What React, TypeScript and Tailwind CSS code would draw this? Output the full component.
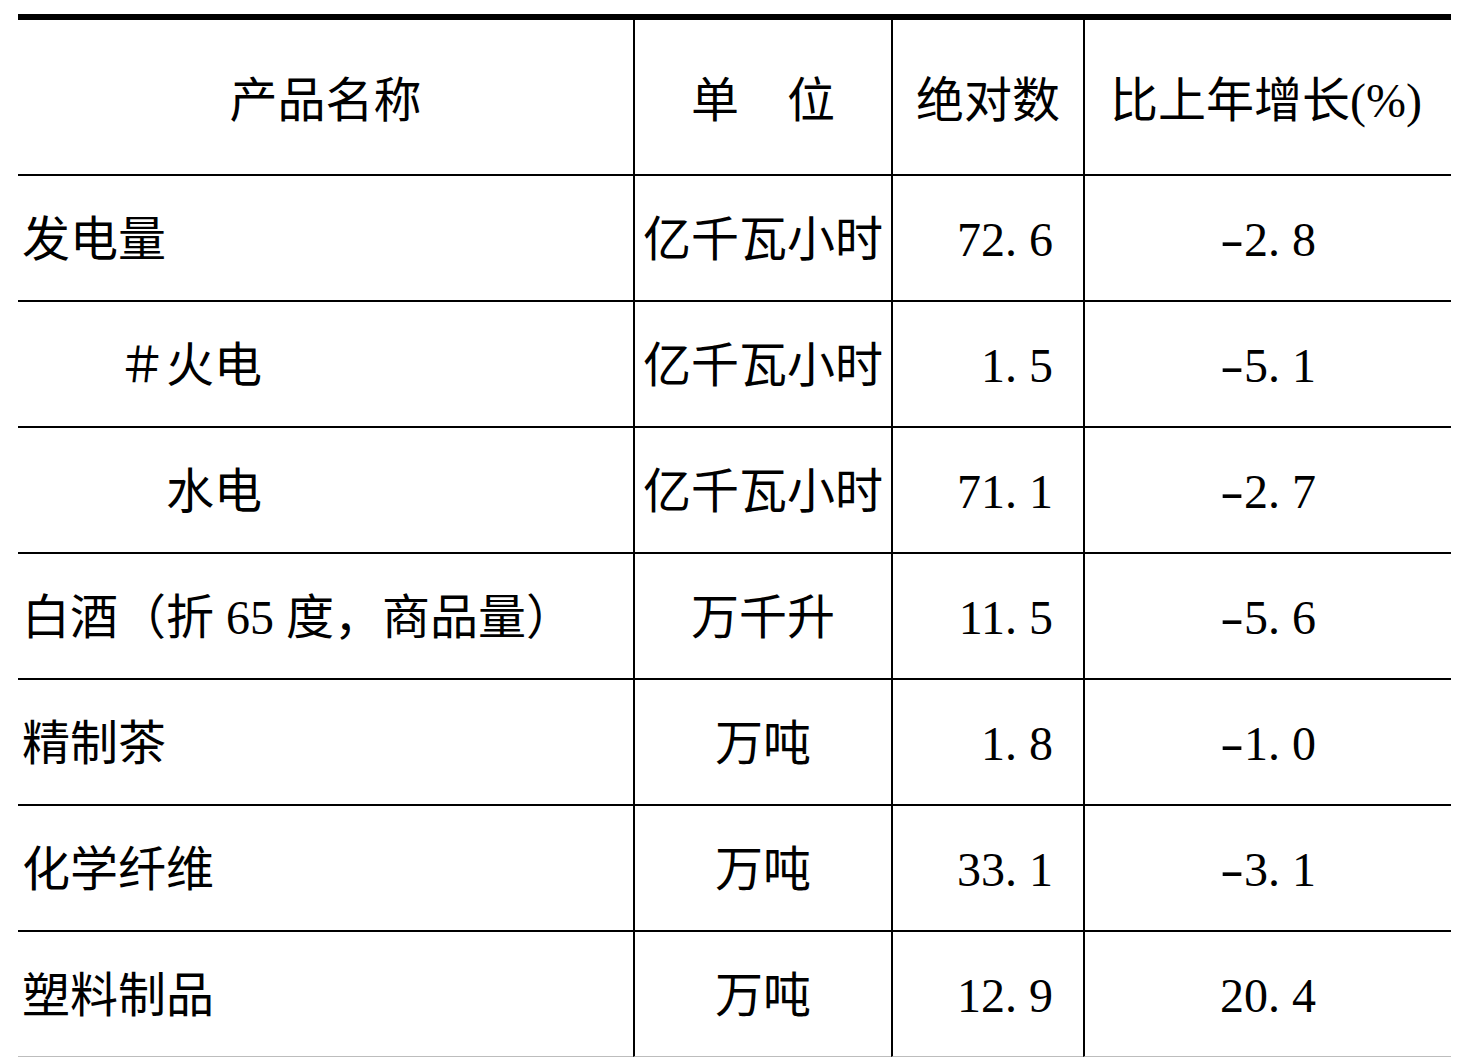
const rows = [
  { name: "发电量", unit: "亿千瓦小时", value: "72.6", growth: "-2.8" },
  { name: "　　＃火电", unit: "亿千瓦小时", value: "1.5", growth: "-5.1" },
  { name: "　　　水电", unit: "亿千瓦小时", value: "71.1", growth: "-2.7" },
  { name: "白酒（折 65 度，商品量）", unit: "万千升", value: "11.5", growth: "-5.6" },
  { name: "精制茶", unit: "万吨", value: "1.8", growth: "-1.0" },
  { name: "化学纤维", unit: "万吨", value: "33.1", growth: "-3.1" },
  { name: "塑料制品", unit: "万吨", value: "12.9", growth: "20.4" },
];

// the source font gives the decimal point and the minus a half-width cell
function Num({ text }: { text: string }) {
  const neg = text.startsWith("-");
  const [a, b] = (neg ? text.slice(1) : text).split(".");
  return (
    <span>
      {neg && <span className="inline-block w-[24px] text-center scale-x-[1.5]">-</span>}
      {a}
      <span className="pr-[12px]">.</span>
      {b}
    </span>
  );
}

export default function App() {
  return (
    <div className="min-h-[1057px] bg-white pt-[14px] text-black font-['Liberation_Serif','Noto_Sans_CJK_SC',serif] text-[48px] leading-none">
      <div className="ml-[18px] w-[1433px] border-t-[6px] border-black">
        <div className="grid grid-cols-[615px_258px_192px_368px]">
          {/* header */}
          <div className="h-[156px] flex items-center justify-center border-b-2 border-black pt-[8px]">
            产品名称
          </div>
          <div className="h-[156px] flex items-center justify-center border-b-2 border-l-2 border-black pt-[8px] whitespace-pre">
            单　位
          </div>
          <div className="h-[156px] flex items-center justify-center border-b-2 border-l-2 border-black pt-[8px]">
            绝对数
          </div>
          <div className="h-[156px] flex items-center justify-center border-b-2 border-l-2 border-black pt-[8px] pr-[4px]">
            比上年增长(%)
          </div>

          {rows.map((r, i) => {
            const last = i === rows.length - 1;
            const bottom = last ? "h-[125px] border-b border-[#bdbdbd]" : "h-[126px] border-b-2 border-black";
            return (
              <div key={r.name} className="contents">
                <div className={`${bottom} flex items-center pl-[4px] pt-[4px] whitespace-pre`}>{r.name}</div>
                <div className={`${bottom} flex items-center justify-center pt-[4px] border-l-2 border-l-black`}>{r.unit}</div>
                <div className={`${bottom} flex items-center justify-end pr-[30px] pt-[4px] border-l-2 border-l-black`}>
                  <Num text={r.value} />
                </div>
                <div className={`${bottom} flex items-center justify-center pt-[4px] border-l-2 border-l-black`}>
                  <Num text={r.growth} />
                </div>
              </div>
            );
          })}
        </div>
      </div>
    </div>
  );
}
